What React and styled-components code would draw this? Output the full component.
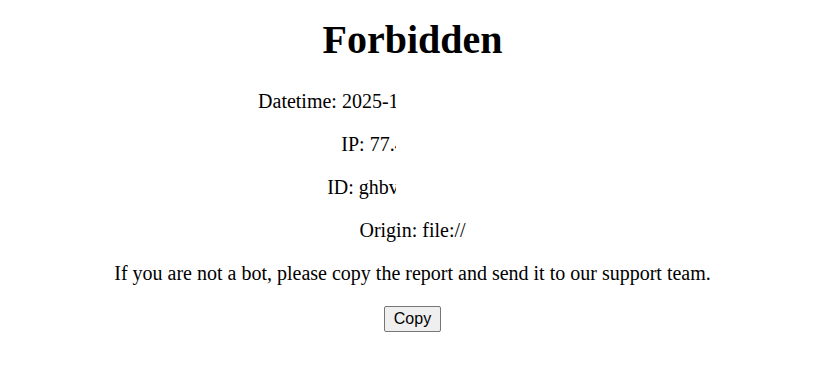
import React from "react";
import styled, { createGlobalStyle } from "styled-components";

const GlobalStyle = createGlobalStyle`
  html, body {
    margin: 0;
    padding: 0;
    background: #fff;
  }
  body {
    font-family: "Liberation Serif", "Times New Roman", serif;
    color: #000;
  }
`;

const Page = styled.div`
  display: flex;
  flex-direction: column;
  align-items: center;
  padding: 16px 0 0 6px;
`;

const Title = styled.h1`
  margin: 0 0 26px;
  font-size: 40px;
  line-height: 48px;
  font-weight: bold;
`;

const Rows = styled.div`
  display: flex;
  flex-direction: column;
  align-items: center;
  gap: 20px;
`;

const Row = styled.div`
  font-size: 20px;
  line-height: 23px;
  white-space: nowrap;
  text-align: center;
`;

const Value = styled.span`
  display: inline-block;
  width: ${(p) => p.$width}px;
  vertical-align: top;
  text-align: left;
`;

const Clip = styled.span`
  display: inline-block;
  max-width: ${(p) => p.$clip}px;
  overflow: hidden;
  vertical-align: top;
`;

const CopyButton = styled.button`
  margin-top: 1px;
  font-family: "Liberation Sans", Arial, sans-serif;
  font-size: 16px;
  line-height: 18px;
  padding: 3px 9px;
  background: #efefef;
  color: #000;
  border: 1px solid #767676;
  border-radius: 2px;
`;

const rows = [
  { label: "Datetime:", value: "2025-11-04 12:31:08", width: 225, clip: 54 },
  { label: "IP:", value: "77.43.118.204", width: 114, clip: 26 },
  { label: "ID:", value: "ghbvz8kq2m4p", width: 139, clip: 37 },
];

export default function App() {
  return (
    <>
      <GlobalStyle />
      <Page>
        <Title>Forbidden</Title>
        <Rows>
          {rows.map((r) => (
            <Row key={r.label}>
              {r.label}{" "}
              <Value $width={r.width}>
                <Clip $clip={r.clip}>{r.value}</Clip>
              </Value>
            </Row>
          ))}
          <Row>Origin: file://</Row>
          <Row>
            If you are not a bot, please copy the report and send it to our
            support team.
          </Row>
          <CopyButton>Copy</CopyButton>
        </Rows>
      </Page>
    </>
  );
}
